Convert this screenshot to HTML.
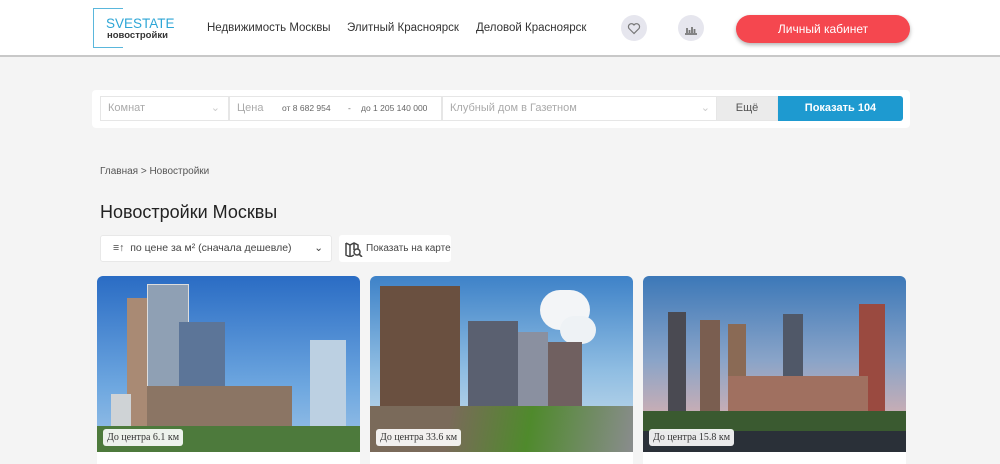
<!DOCTYPE html>
<html><head><meta charset="utf-8"><style>
*{margin:0;padding:0;box-sizing:border-box}
body{width:1000px;height:464px;overflow:hidden;background:#f4f4f4;font-family:"Liberation Sans","Noto Sans CJK JP",sans-serif;position:relative}
.hdr{position:absolute;left:0;top:0;width:1000px;height:57px;background:#fff;border-bottom:2px solid #c8c8c8}
.a{position:absolute;white-space:nowrap}
.nav{font-size:11.5px;color:#333;top:22px}
.circ{width:26px;height:26px;border-radius:50%;background:#e6e6ee;top:15px}
.btn{left:736px;top:15px;width:174px;height:28px;border-radius:14px;background:#f5474f;color:#fff;font-size:12px;text-align:center;line-height:28px;box-shadow:0 2px 4px rgba(0,0,0,.3)}
.flt{left:92px;top:90px;width:818px;height:38px;background:#fff;border-radius:4px}
.f{top:96px;height:25px;border:1px solid #e6e6e6;font-size:11px;color:#aaa;line-height:23px;padding-left:7px}
.card{top:276px;width:263px;height:188px;border-radius:6px 6px 0 0;overflow:hidden}
.tag{position:absolute;left:6px;top:153px;background:rgba(255,255,255,.9);font-family:"Liberation Serif",serif;font-size:10px;color:#333;padding:3px 4px;border-radius:3px}
.bot{position:absolute;left:0;top:176px;width:100%;height:12px;background:#fff}
.b{position:absolute}
</style></head><body>
<div class="hdr">
 <div class="a" style="left:93px;top:8px;width:1px;height:40px;background:#5ab7dc"></div>
 <div class="a" style="left:93px;top:8px;width:30px;height:1px;background:#5ab7dc"></div>
 <div class="a" style="left:93px;top:47px;width:30px;height:1px;background:#5ab7dc"></div>
 <div class="a" style="left:106px;top:16px;font-size:13.5px;color:#2ea6d6">SVESTATE</div>
 <div class="a" style="left:107px;top:30px;font-size:9.5px;color:#333;font-weight:bold">новостройки</div>
 <div class="a nav" style="left:207px">Недвижимость Москвы</div>
 <div class="a nav" style="left:347px">Элитный Красноярск</div>
 <div class="a nav" style="left:476px">Деловой Красноярск</div>
 <div class="a circ" style="left:621px"><svg width="26" height="26"><path d="M13 18.5l-5-5a3 3 0 0 1 5-3.5a3 3 0 0 1 5 3.5z" fill="none" stroke="#777" stroke-width="1.2"/></svg></div>
 <div class="a circ" style="left:678px"><svg width="26" height="26"><path d="M7 19h12M9 18v-5M11.5 18v-3M14 18v-6M16.5 18v-4" stroke="#777" stroke-width="1.8"/></svg></div>
 <div class="a btn">Личный кабинет</div>
</div>
<div class="a flt"></div>
<div class="a f" style="left:100px;width:129px">Комнат<span style="position:absolute;right:8px;color:#ccc">⌄</span></div>
<div class="a f" style="left:229px;width:213px">Цена<span style="position:absolute;left:52px;font-size:8.5px;color:#666">от 8 682 954</span><span style="position:absolute;left:118px;font-size:8.5px;color:#666">-</span><span style="position:absolute;left:131px;font-size:8.5px;color:#666">до 1 205 140 000</span></div>
<div class="a f" style="left:442px;width:275px">Клубный дом в Газетном<span style="position:absolute;right:6px;color:#ccc">⌄</span></div>
<div class="a f" style="left:716px;width:62px;background:#ebebeb;color:#555;text-align:center;padding:0">Ещё</div>
<div class="a" style="left:778px;top:96px;width:125px;height:25px;background:#1e9ad0;color:#fff;font-size:11px;font-weight:bold;text-align:center;line-height:25px;border-radius:0 3px 3px 0">Показать 104</div>
<div class="a" style="left:100px;top:166px;font-size:10px;color:#555">Главная &gt; Новостройки</div>
<div class="a" style="left:100px;top:202px;font-size:18px;color:#222">Новостройки Москвы</div>
<div class="a" style="left:100px;top:235px;width:232px;height:27px;background:#fff;border:1px solid #e8e8e8;border-radius:3px;font-size:10.5px;color:#444;line-height:25px;padding-left:12px">≡↑&nbsp; по цене за м² (сначала дешевле)<span style="position:absolute;right:8px">⌄</span></div>
<div class="a" style="left:339px;top:235px;width:112px;height:27px;background:#fff;border-radius:3px;font-size:10px;color:#444;line-height:27px;padding-left:27px"><svg class="b" style="left:6px;top:6px" width="18" height="16"><path d="M1 2l4 2 4-2 4 2v4M1 2v12l4 2 4-2M5 4v12M9 2v7" fill="none" stroke="#444" stroke-width="1.5"/><circle cx="12" cy="11" r="3" fill="none" stroke="#444" stroke-width="1.5"/><path d="M14 13l3 3" stroke="#444" stroke-width="1.6"/></svg>Показать на карте</div>

<div class="a card" style="left:97px;background:linear-gradient(#2a6cc4,#6fa8e0 60%,#a6c8e8)">
 <div class="b" style="left:30px;top:22px;width:40px;height:150px;background:#a98a74"></div>
 <div class="b" style="left:50px;top:8px;width:42px;height:110px;background:#8fa0b4;border:1px solid #ddd"></div>
 <div class="b" style="left:82px;top:46px;width:46px;height:70px;background:#5c7598"></div>
 <div class="b" style="left:50px;top:110px;width:145px;height:60px;background:#8b7564"></div>
 <div class="b" style="left:14px;top:118px;width:20px;height:50px;background:#cfd3d6"></div>
 <div class="b" style="left:213px;top:64px;width:36px;height:90px;background:#bcd0e2"></div>
 <div class="b" style="left:0;top:150px;width:263px;height:30px;background:#4d7a3c"></div>
 <div class="tag">До центра 6.1 км</div><div class="bot"></div>
</div>
<div class="a card" style="left:370px;background:linear-gradient(#3e82c8,#8fbde2 50%,#d8e6ee)">
 <div class="b" style="left:170px;top:14px;width:50px;height:40px;background:#f3f5f7;border-radius:20px"></div>
 <div class="b" style="left:190px;top:40px;width:36px;height:28px;background:#eef2f5;border-radius:14px"></div>
 <div class="b" style="left:10px;top:10px;width:80px;height:140px;background:#6a5040"></div>
 <div class="b" style="left:98px;top:45px;width:50px;height:100px;background:#5a6070"></div>
 <div class="b" style="left:148px;top:56px;width:30px;height:80px;background:#8a90a0"></div>
 <div class="b" style="left:178px;top:66px;width:34px;height:70px;background:#706060"></div>
 <div class="b" style="left:0;top:130px;width:263px;height:50px;background:linear-gradient(100deg,#7a6a5a 30%,#4f8a2c 60%,#8a8c8e)"></div>
 <div class="tag">До центра 33.6 км</div><div class="bot"></div>
</div>
<div class="a card" style="left:643px;background:linear-gradient(#3c78b8,#8aa4c8 45%,#d8b0b0 80%)">
 <div class="b" style="left:25px;top:36px;width:18px;height:104px;background:#4a4a52"></div>
 <div class="b" style="left:57px;top:44px;width:20px;height:96px;background:#7a5e50"></div>
 <div class="b" style="left:85px;top:48px;width:18px;height:90px;background:#8a6a55"></div>
 <div class="b" style="left:140px;top:38px;width:20px;height:100px;background:#505868"></div>
 <div class="b" style="left:216px;top:28px;width:26px;height:112px;background:#9a4a40"></div>
 <div class="b" style="left:85px;top:100px;width:140px;height:40px;background:#a07060"></div>
 <div class="b" style="left:0;top:135px;width:263px;height:20px;background:#3a5a30"></div>
 <div class="b" style="left:0;top:155px;width:263px;height:25px;background:#2a3038"></div>
 <div class="tag">До центра 15.8 км</div><div class="bot"></div>
</div>
</body></html>
